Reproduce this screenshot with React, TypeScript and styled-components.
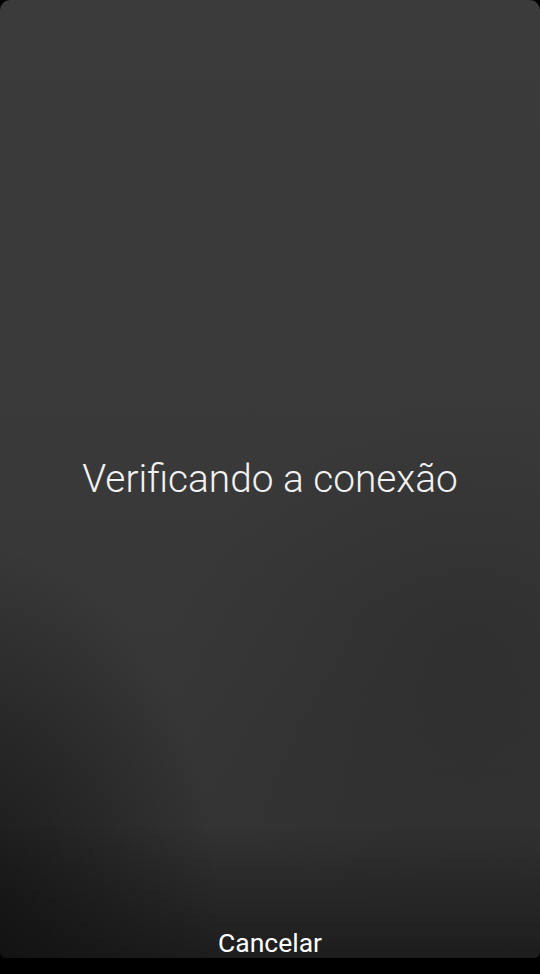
import styled, { createGlobalStyle } from 'styled-components'

const GlobalStyle = createGlobalStyle`
    html, body {
        margin: 0;
        padding: 0;
        background: #000;
    }
    body {
        font-family: Roboto, 'Noto Sans', sans-serif;
    }
`

const App = () => {
    return (
        <Page>
            <GlobalStyle />
            <Screen>
                <Body>
                    <Status>Verificando a conexão</Status>
                </Body>
                <Footer>
                    <CancelButton type='button'>Cancelar</CancelButton>
                </Footer>
            </Screen>
        </Page>
    )
}

export default App

const Page = styled.div`
    width: 540px;
    height: 974px;
    display: flex;
    flex-direction: column;
    background: #000;
    overflow: hidden;
`

const Screen = styled.div`
    height: 958px;
    display: flex;
    flex-direction: column;
    border-radius: 10px 10px 6px 6px;
    overflow: hidden;
    background:
        linear-gradient(180deg, rgba(0, 0, 0, 0) 0%, rgba(0, 0, 0, 0) 86%, rgba(10, 10, 10, 0.5) 100%),
        radial-gradient(ellipse 260px 380px at -40px 920px, rgba(12, 12, 12, 0.7) 0%, rgba(12, 12, 12, 0) 100%),
        radial-gradient(ellipse 300px 260px at 470px 660px, rgba(30, 30, 30, 0.3) 0%, rgba(30, 30, 30, 0) 100%),
        linear-gradient(180deg, #3b3b3b 0%, #3a3a3a 40%, #373737 70%, #303030 100%);
`

const Body = styled.div`
    flex: 1;
    display: flex;
    align-items: center;
    justify-content: center;
    padding-top: 30px;
`

const Status = styled.h1`
    margin: 0;
    font-family: Roboto, 'Noto Sans', sans-serif;
    font-weight: 300;
    font-size: 38.8px;
    line-height: 44px;
    color: #f2f2f2;
`

const Footer = styled.div`
    display: flex;
    justify-content: center;
`

const CancelButton = styled.button`
    border: none;
    background: transparent;
    padding: 0;
    font-family: Roboto, 'Noto Sans', sans-serif;
    font-weight: 400;
    font-size: 26.5px;
    line-height: 30px;
    color: #ffffff;
    cursor: pointer;
`
